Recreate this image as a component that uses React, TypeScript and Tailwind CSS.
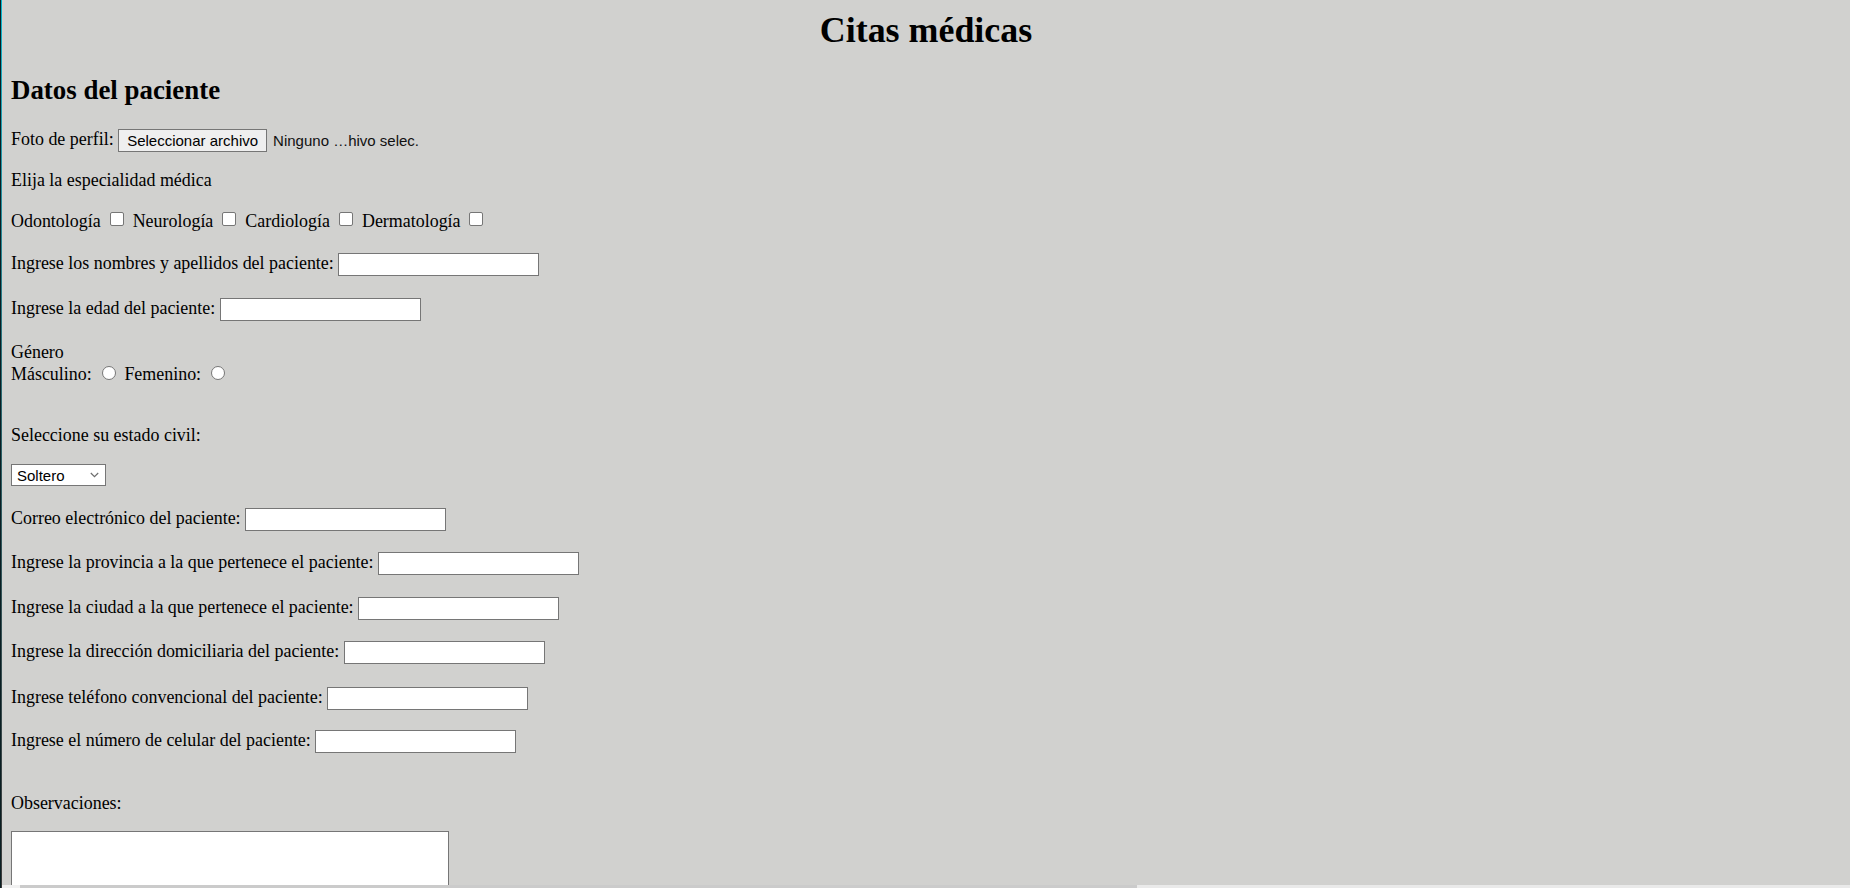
import React from "react";

const serif = "font-['Liberation_Serif','Times_New_Roman',serif]";
const sans = "font-['Liberation_Sans',Arial,sans-serif]";

function Field({ label, className }: { label: string; className: string }) {
  return (
    <div className={`h-[23px] whitespace-nowrap leading-[20px] ${className}`}>
      {label}{" "}
      <input
        type="text"
        className={`align-top h-[23px] w-[201px] border border-[#767676] bg-white px-[2px] text-[15px] ${sans} outline-none`}
      />
    </div>
  );
}

function Check() {
  return (
    <span className="inline-block align-[1px] ml-[4.4px] mr-[4.6px] h-[14px] w-[14px] rounded-[2px] border border-[#767676] bg-white" />
  );
}

function Radio() {
  return (
    <span className="inline-block align-baseline ml-[5.5px] mr-[4.2px] h-[14px] w-[14px] rounded-full border border-[#767676] bg-white" />
  );
}

export default function App() {
  return (
    <div className={`relative h-screen w-full overflow-hidden bg-[#d1d1cf] text-black ${serif} text-[17.95px]`}>
      <div className="absolute left-0 top-0 bottom-0 w-[2px] flex">
        <div className="w-[1px] h-full bg-[#0a1e22]" />
        <div className="w-[1px] h-full bg-gradient-to-b from-[#00b8d0] via-[#2a5f66] to-[#3a3a3a]" />
      </div>
      <div className="flex flex-col pl-[11px] pr-[9px]">
        <h1 className="mt-[10px] h-[40px] text-center text-[35.9px] font-bold leading-[40px]">Citas médicas</h1>
        <h2 className="mt-[25px] h-[30px] text-[26.9px] font-bold leading-[30px]">Datos del paciente</h2>

        <div className="mt-[24px] h-[23px] whitespace-nowrap leading-[20px]">
          Foto de perfil:{" "}
          <span className={`inline-flex align-top h-[23px] items-center ${sans} text-[15px]`}>
            <span className="inline-flex h-[23px] w-[149px] items-center justify-center border border-[#767676] bg-[#efefef] leading-[17px]">
              Seleccionar archivo
            </span>
            <span className="ml-[6px] leading-[17px] text-[#101010]">Ninguno …hivo selec.</span>
          </span>
        </div>

        <div className="mt-[18px] h-[20px] leading-[20px]">Elija la especialidad médica</div>

        <div className="mt-[21px] h-[20px] whitespace-nowrap leading-[20px]">
          Odontología <Check /> Neurología <Check /> Cardiología <Check /> Dermatología <Check />
        </div>

        <Field className="mt-[22px]" label="Ingrese los nombres y apellidos del paciente:" />
        <Field className="mt-[22px]" label="Ingrese la edad del paciente:" />

        <div className="mt-[21px] h-[20px] leading-[20px]">Género</div>
        <div className="mt-[2px] h-[20px] whitespace-nowrap leading-[20px]">
          Másculino: <Radio /> Femenino: <Radio />
        </div>

        <div className="mt-[41px] h-[20px] leading-[20px]">Seleccione su estado civil:</div>

        <div className="mt-[19px] h-[22px]">
          <div className={`flex h-[22px] w-[95px] items-center justify-between border border-[#767676] bg-white pl-[5px] pr-[5px] ${sans} text-[15px] leading-[17px]`}>
            <span>Soltero</span>
            <svg width="9" height="6" viewBox="0 0 9 6" className="mr-[1px]">
              <polyline points="0.8,1 4.5,4.6 8.2,1" fill="none" stroke="#6d6d6d" strokeWidth="1.2" />
            </svg>
          </div>
        </div>

        <Field className="mt-[22px]" label="Correo electrónico del paciente:" />
        <Field className="mt-[21px]" label="Ingrese la provincia a la que pertenece el paciente:" />
        <Field className="mt-[22px]" label="Ingrese la ciudad a la que pertenece el paciente:" />
        <Field className="mt-[21px]" label="Ingrese la dirección domiciliaria del paciente:" />
        <Field className="mt-[23px]" label="Ingrese teléfono convencional del paciente:" />
        <Field className="mt-[20px]" label="Ingrese el número de celular del paciente:" />

        <div className="mt-[40px] h-[20px] leading-[20px]">Observaciones:</div>

        <div className="mt-[18px]">
          <textarea className={`block h-[120px] w-[438px] resize-none border border-[#767676] bg-white ${sans} text-[15px] outline-none`} />
        </div>
      </div>

      <div className="absolute bottom-0 left-[2px] right-0 flex h-[3px]">
        <div className="w-[18px] bg-[#f1f1f1]" />
        <div className="w-[1117px] bg-[#cbcbcb]" />
        <div className="flex-1 bg-[#eaeaea]" />
      </div>
    </div>
  );
}
